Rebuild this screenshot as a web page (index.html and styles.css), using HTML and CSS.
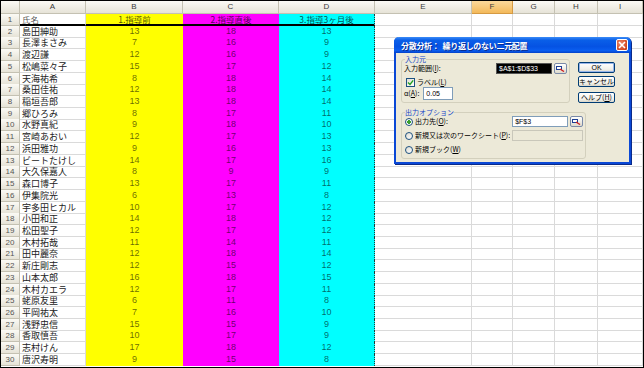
FILE: index.html
```html
<!DOCTYPE html>
<html lang="ja">
<head>
  <meta charset="UTF-8" />
  <title>分散分析</title>
  <link rel="stylesheet" href="styles.css">
</head>
<body>
  <div class="excel">
    <div class="row head">
      <div class="rh corner"></div>
      <div class="ch">A</div>
      <div class="ch">B</div>
      <div class="ch">C</div>
      <div class="ch">D</div>
      <div class="ch">E</div>
      <div class="ch active">F</div>
      <div class="ch">G</div>
      <div class="ch">H</div>
      <div class="ch">I</div>
    </div>

    <div class="row first"><div class="rh">1</div><div class="cell name">氏名</div><div class="cell b">1.指導前</div><div class="cell c">2.指導直後</div><div class="cell d">3.指導3ヶ月後</div><div class="cell"></div><div class="cell"></div><div class="cell"></div><div class="cell"></div><div class="cell"></div></div>
    <div class="row"><div class="rh">2</div><div class="cell name">島田紳助</div><div class="cell b">13</div><div class="cell c">18</div><div class="cell d">13</div><div class="cell"></div><div class="cell"></div><div class="cell"></div><div class="cell"></div><div class="cell"></div></div>
    <div class="row"><div class="rh">3</div><div class="cell name">長澤まさみ</div><div class="cell b">7</div><div class="cell c">16</div><div class="cell d">9</div><div class="cell"></div><div class="cell"></div><div class="cell"></div><div class="cell"></div><div class="cell"></div></div>
    <div class="row"><div class="rh">4</div><div class="cell name">渡辺謙</div><div class="cell b">12</div><div class="cell c">16</div><div class="cell d">9</div><div class="cell"></div><div class="cell"></div><div class="cell"></div><div class="cell"></div><div class="cell"></div></div>
    <div class="row"><div class="rh">5</div><div class="cell name">松嶋菜々子</div><div class="cell b">15</div><div class="cell c">17</div><div class="cell d">12</div><div class="cell"></div><div class="cell"></div><div class="cell"></div><div class="cell"></div><div class="cell"></div></div>
    <div class="row"><div class="rh">6</div><div class="cell name">天海祐希</div><div class="cell b">8</div><div class="cell c">18</div><div class="cell d">14</div><div class="cell"></div><div class="cell"></div><div class="cell"></div><div class="cell"></div><div class="cell"></div></div>
    <div class="row"><div class="rh">7</div><div class="cell name">桑田佳祐</div><div class="cell b">12</div><div class="cell c">18</div><div class="cell d">14</div><div class="cell"></div><div class="cell"></div><div class="cell"></div><div class="cell"></div><div class="cell"></div></div>
    <div class="row"><div class="rh">8</div><div class="cell name">稲垣吾郎</div><div class="cell b">13</div><div class="cell c">18</div><div class="cell d">14</div><div class="cell"></div><div class="cell"></div><div class="cell"></div><div class="cell"></div><div class="cell"></div></div>
    <div class="row"><div class="rh">9</div><div class="cell name">郷ひろみ</div><div class="cell b">8</div><div class="cell c">17</div><div class="cell d">11</div><div class="cell"></div><div class="cell"></div><div class="cell"></div><div class="cell"></div><div class="cell"></div></div>
    <div class="row"><div class="rh">10</div><div class="cell name">水野真紀</div><div class="cell b">9</div><div class="cell c">18</div><div class="cell d">10</div><div class="cell"></div><div class="cell"></div><div class="cell"></div><div class="cell"></div><div class="cell"></div></div>
    <div class="row"><div class="rh">11</div><div class="cell name">宮崎あおい</div><div class="cell b">12</div><div class="cell c">17</div><div class="cell d">13</div><div class="cell"></div><div class="cell"></div><div class="cell"></div><div class="cell"></div><div class="cell"></div></div>
    <div class="row"><div class="rh">12</div><div class="cell name">浜田雅功</div><div class="cell b">9</div><div class="cell c">16</div><div class="cell d">13</div><div class="cell"></div><div class="cell"></div><div class="cell"></div><div class="cell"></div><div class="cell"></div></div>
    <div class="row"><div class="rh">13</div><div class="cell name">ビートたけし</div><div class="cell b">14</div><div class="cell c">17</div><div class="cell d">16</div><div class="cell"></div><div class="cell"></div><div class="cell"></div><div class="cell"></div><div class="cell"></div></div>
    <div class="row"><div class="rh">14</div><div class="cell name">大久保嘉人</div><div class="cell b">8</div><div class="cell c">9</div><div class="cell d">9</div><div class="cell"></div><div class="cell"></div><div class="cell"></div><div class="cell"></div><div class="cell"></div></div>
    <div class="row"><div class="rh">15</div><div class="cell name">森口博子</div><div class="cell b">13</div><div class="cell c">17</div><div class="cell d">11</div><div class="cell"></div><div class="cell"></div><div class="cell"></div><div class="cell"></div><div class="cell"></div></div>
    <div class="row"><div class="rh">16</div><div class="cell name">伊集院光</div><div class="cell b">6</div><div class="cell c">13</div><div class="cell d">8</div><div class="cell"></div><div class="cell"></div><div class="cell"></div><div class="cell"></div><div class="cell"></div></div>
    <div class="row"><div class="rh">17</div><div class="cell name">宇多田ヒカル</div><div class="cell b">10</div><div class="cell c">17</div><div class="cell d">12</div><div class="cell"></div><div class="cell"></div><div class="cell"></div><div class="cell"></div><div class="cell"></div></div>
    <div class="row"><div class="rh">18</div><div class="cell name">小田和正</div><div class="cell b">14</div><div class="cell c">18</div><div class="cell d">12</div><div class="cell"></div><div class="cell"></div><div class="cell"></div><div class="cell"></div><div class="cell"></div></div>
    <div class="row"><div class="rh">19</div><div class="cell name">松田聖子</div><div class="cell b">12</div><div class="cell c">17</div><div class="cell d">12</div><div class="cell"></div><div class="cell"></div><div class="cell"></div><div class="cell"></div><div class="cell"></div></div>
    <div class="row"><div class="rh">20</div><div class="cell name">木村拓哉</div><div class="cell b">11</div><div class="cell c">14</div><div class="cell d">11</div><div class="cell"></div><div class="cell"></div><div class="cell"></div><div class="cell"></div><div class="cell"></div></div>
    <div class="row"><div class="rh">21</div><div class="cell name">田中麗奈</div><div class="cell b">12</div><div class="cell c">18</div><div class="cell d">14</div><div class="cell"></div><div class="cell"></div><div class="cell"></div><div class="cell"></div><div class="cell"></div></div>
    <div class="row"><div class="rh">22</div><div class="cell name">新庄剛志</div><div class="cell b">12</div><div class="cell c">15</div><div class="cell d">12</div><div class="cell"></div><div class="cell"></div><div class="cell"></div><div class="cell"></div><div class="cell"></div></div>
    <div class="row"><div class="rh">23</div><div class="cell name">山本太郎</div><div class="cell b">16</div><div class="cell c">18</div><div class="cell d">15</div><div class="cell"></div><div class="cell"></div><div class="cell"></div><div class="cell"></div><div class="cell"></div></div>
    <div class="row"><div class="rh">24</div><div class="cell name">木村カエラ</div><div class="cell b">12</div><div class="cell c">17</div><div class="cell d">11</div><div class="cell"></div><div class="cell"></div><div class="cell"></div><div class="cell"></div><div class="cell"></div></div>
    <div class="row"><div class="rh">25</div><div class="cell name">蛯原友里</div><div class="cell b">6</div><div class="cell c">11</div><div class="cell d">8</div><div class="cell"></div><div class="cell"></div><div class="cell"></div><div class="cell"></div><div class="cell"></div></div>
    <div class="row"><div class="rh">26</div><div class="cell name">平岡祐太</div><div class="cell b">7</div><div class="cell c">16</div><div class="cell d">10</div><div class="cell"></div><div class="cell"></div><div class="cell"></div><div class="cell"></div><div class="cell"></div></div>
    <div class="row"><div class="rh">27</div><div class="cell name">浅野忠信</div><div class="cell b">15</div><div class="cell c">15</div><div class="cell d">9</div><div class="cell"></div><div class="cell"></div><div class="cell"></div><div class="cell"></div><div class="cell"></div></div>
    <div class="row"><div class="rh">28</div><div class="cell name">香取慎吾</div><div class="cell b">10</div><div class="cell c">17</div><div class="cell d">9</div><div class="cell"></div><div class="cell"></div><div class="cell"></div><div class="cell"></div><div class="cell"></div></div>
    <div class="row"><div class="rh">29</div><div class="cell name">志村けん</div><div class="cell b">17</div><div class="cell c">18</div><div class="cell d">12</div><div class="cell"></div><div class="cell"></div><div class="cell"></div><div class="cell"></div><div class="cell"></div></div>
    <div class="row"><div class="rh">30</div><div class="cell name">唐沢寿明</div><div class="cell b">9</div><div class="cell c">15</div><div class="cell d">8</div><div class="cell"></div><div class="cell"></div><div class="cell"></div><div class="cell"></div><div class="cell"></div></div>

    <div class="dialog">
      <div class="titlebar">
        <span class="title">分散分析：&nbsp; 繰り返しのない二元配置</span>
        <div class="close">
          <svg width="8" height="8" viewBox="0 0 8 8"><path d="M1 1L7 7M7 1L1 7" stroke="#fff" stroke-width="1.6"/></svg>
        </div>
      </div>
      <div class="dialog-body">
        <div class="dlg-left">
          <fieldset class="group g1">
            <legend>入力元</legend>
            <div class="f-row">
              <span class="lbl">入力範囲(<u>I</u>):</span>
              <span class="field selected">$A$1:$D$33</span>
              <span class="ref-btn">
                <svg width="9" height="6" viewBox="0 0 9 6"><rect x="0.5" y="0.5" width="5" height="3" fill="#fff" stroke="#1c3f94"/><path d="M4 3L8 5.5" stroke="#d02020" stroke-width="1.4"/></svg>
              </span>
            </div>
            <div class="f-row check-row">
              <span class="checkbox">
                <svg width="7" height="7" viewBox="0 0 7 7"><path d="M1 3.5L3 5.5L6.2 1.3" fill="none" stroke="#21a121" stroke-width="1.4"/></svg>
              </span>
              <span class="lbl">ラベル(<u>L</u>)</span>
            </div>
            <div class="f-row alpha-row">
              <span class="lbl">α(<u>A</u>):</span>
              <span class="field alpha">0.05</span>
            </div>
          </fieldset>

          <fieldset class="group g2">
            <legend>出力オプション</legend>
            <div class="f-row">
              <span class="radio on"></span>
              <span class="lbl">出力先(<u>O</u>):</span>
              <span class="field">$F$3</span>
              <span class="ref-btn">
                <svg width="9" height="6" viewBox="0 0 9 6"><rect x="0.5" y="0.5" width="5" height="3" fill="#fff" stroke="#1c3f94"/><path d="M4 3L8 5.5" stroke="#d02020" stroke-width="1.4"/></svg>
              </span>
            </div>
            <div class="f-row">
              <span class="radio"></span>
              <span class="lbl clip">新規又は次のワークシート(<u>P</u>):</span>
              <span class="field disabled"></span>
            </div>
            <div class="f-row">
              <span class="radio"></span>
              <span class="lbl">新規ブック(<u>W</u>)</span>
            </div>
          </fieldset>
        </div>

        <div class="dlg-buttons">
          <div class="btn default">OK</div>
          <div class="btn">キャンセル</div>
          <div class="btn help">ヘルプ(<u>H</u>)</div>
        </div>
      </div>
    </div>
  </div>
</body>
</html>
```

FILE: styles.css
```css
* {
  margin: 0;
  padding: 0;
  box-sizing: border-box;
}

body {
  background: #fff;
  font-family: "Noto Sans CJK JP", "Liberation Sans", sans-serif;
  overflow: hidden;
}

.excel {
  position: relative;
  width: 644px;
  height: 368px;
  border: 1px solid #000;
  overflow: hidden;
  background: #fff;
}

/* sheet grid */

.row {
  display: grid;
  grid-template-columns: 19px 66px 97px 96px 96px 97px 41px 42px 43px 45px;
  height: 11.72px;
}

.row.head {
  height: 13px;
}

.ch,
.rh {
  background: linear-gradient(#fbfaf5, #e6e3d7);
  border-right: 1px solid #c4c1b2;
  border-bottom: 1px solid #c4c1b2;
  color: #3a3a3a;
  font-family: "Liberation Sans", sans-serif;
  font-size: 8px;
  text-align: center;
  line-height: 12px;
}

.rh {
  line-height: 11px;
  font-size: 8px;
  color: #555;
}

.ch.active {
  background: linear-gradient(#fbd99c, #f3b95a);
  border-color: #d59a43;
}

.cell {
  border-right: 1px solid #dadada;
  border-bottom: 1px solid #dadada;
  font-size: 9px;
  line-height: 11px;
  white-space: nowrap;
  overflow: hidden;
}

.cell.name {
  padding-left: 2px;
  color: #222;
}

.cell.b,
.cell.c,
.cell.d {
  border: none;
  text-align: center;
  font-family: "Liberation Sans", "Noto Sans CJK JP", sans-serif;
  color: rgba(0, 0, 0, 0.6);
}

.cell.b { background: #ffff00; }
.cell.c { background: #ff00ff; }
.cell.d {
  background: #00ffff;
  border-right: 1px dotted #1b3b3b;
}

.row.first .cell.name,
.row.first .cell.b,
.row.first .cell.c,
.row.first .cell.d {
  border-bottom: 2px solid #000;
  font-family: "Noto Sans CJK JP", sans-serif;
  font-size: 8.5px;
  color: rgba(0, 0, 0, 0.7);
  line-height: 10px;
  overflow: visible;
}

.row.first .cell.d {
  border-right: 1px dotted #1b3b3b;
}

/* dialog over the sheet */

.dialog {
  position: absolute;
  left: 393px;
  top: 36px;
  width: 237px;
  height: 127px;
  background: #ece9d8;
  border: 2px solid #0a48d6;
  border-top: none;
  border-radius: 5px 5px 0 0;
  box-shadow: 1px 1px 0 #0a2a8a;
}

.titlebar {
  height: 16px;
  margin: 0 -2px;
  padding: 0 3px 0 7px;
  border-radius: 5px 5px 0 0;
  background: linear-gradient(#3b8cf7 0%, #0a5fe8 20%, #0552e3 60%, #0a5ef0 85%, #0341c8 100%);
  display: flex;
  align-items: center;
  justify-content: space-between;
}

.title {
  color: #fff;
  font-size: 8px;
  font-weight: bold;
  letter-spacing: -0.3px;
  text-shadow: 1px 1px 0 #0a2d8f;
}

.close {
  width: 12px;
  height: 12px;
  border: 1px solid #fff;
  border-radius: 2px;
  background: radial-gradient(circle at 35% 35%, #ee8a6c, #d24a25 70%, #b8381a);
  display: flex;
  align-items: center;
  justify-content: center;
}

.dialog-body {
  display: flex;
  gap: 8px;
  padding: 2px 0 0 5px;
}

.dlg-left {
  width: 169px;
  display: flex;
  flex-direction: column;
  gap: 4px;
}

.group {
  border: 1px solid #d3d0bd;
  border-radius: 3px;
  padding: 0 2px 0 2px;
  font-size: 7px;
  color: #000;
}

.group legend {
  color: #1546c8;
  font-size: 7px;
  line-height: 8px;
  padding: 0;
  margin-left: 1px;
}

.g1 { height: 48px; }
.g2 { height: 51px; margin-top: 1px; }

.f-row {
  display: flex;
  align-items: center;
  height: 11px;
  gap: 2px;
}

.g2 .f-row + .f-row {
  margin-top: 3px;
}

.lbl {
  font-size: 7px;
  line-height: 9px;
  white-space: nowrap;
}

.lbl.clip {
  flex: 1;
  min-width: 0;
  overflow: hidden;
}

.field {
  margin-left: auto;
  width: 56px;
  height: 11px;
  background: #fff;
  border: 1px solid #7f9db9;
  font-family: "Liberation Sans", sans-serif;
  font-size: 7px;
  line-height: 9px;
  padding-left: 2px;
  white-space: nowrap;
  overflow: hidden;
}

.field.selected {
  background: #000;
  color: #fff;
  border-color: #555;
}

.field.disabled {
  margin-left: 0;
  width: 71px;
  background: #ece9d8;
  border-color: #c9c7ba;
}

.ref-btn {
  width: 13px;
  height: 11px;
  border: 1px solid #7a8aa8;
  border-radius: 2px;
  background: linear-gradient(#fff, #dedbcd);
  display: flex;
  align-items: center;
  justify-content: center;
}

.check-row {
  margin-top: 3px;
  padding-left: 2px;
  height: 10px;
}

.checkbox {
  width: 9px;
  height: 9px;
  border: 1px solid #1c5180;
  background: linear-gradient(135deg, #e0ded4, #fff);
  display: flex;
  align-items: center;
  justify-content: center;
}

.alpha-row {
  height: 13px;
  gap: 4px;
}

.field.alpha {
  margin-left: 0;
  width: 30px;
  height: 13px;
  line-height: 11px;
}

.radio {
  width: 8px;
  height: 8px;
  margin-left: 1px;
  border: 1px solid #1c5180;
  border-radius: 50%;
  background: linear-gradient(135deg, #dcdad0, #fff);
  flex-shrink: 0;
}

.radio.on {
  background: radial-gradient(circle, #3aa02e 0 1.6px, #fff 2px);
}

.dlg-buttons {
  display: flex;
  flex-direction: column;
  padding-top: 7px;
}

.btn {
  width: 37px;
  height: 11px;
  border: 1px solid #003c74;
  border-radius: 2px;
  background: linear-gradient(#ffffff, #f0efe9 70%, #d9d5c8);
  font-size: 7px;
  line-height: 9px;
  text-align: center;
  color: #000;
  margin-bottom: 3px;
}

.btn.default {
  box-shadow: inset 0 0 0 1px #97b5ea;
  font-family: "Liberation Sans", sans-serif;
}

.btn.help {
  margin-top: 2px;
}
```
